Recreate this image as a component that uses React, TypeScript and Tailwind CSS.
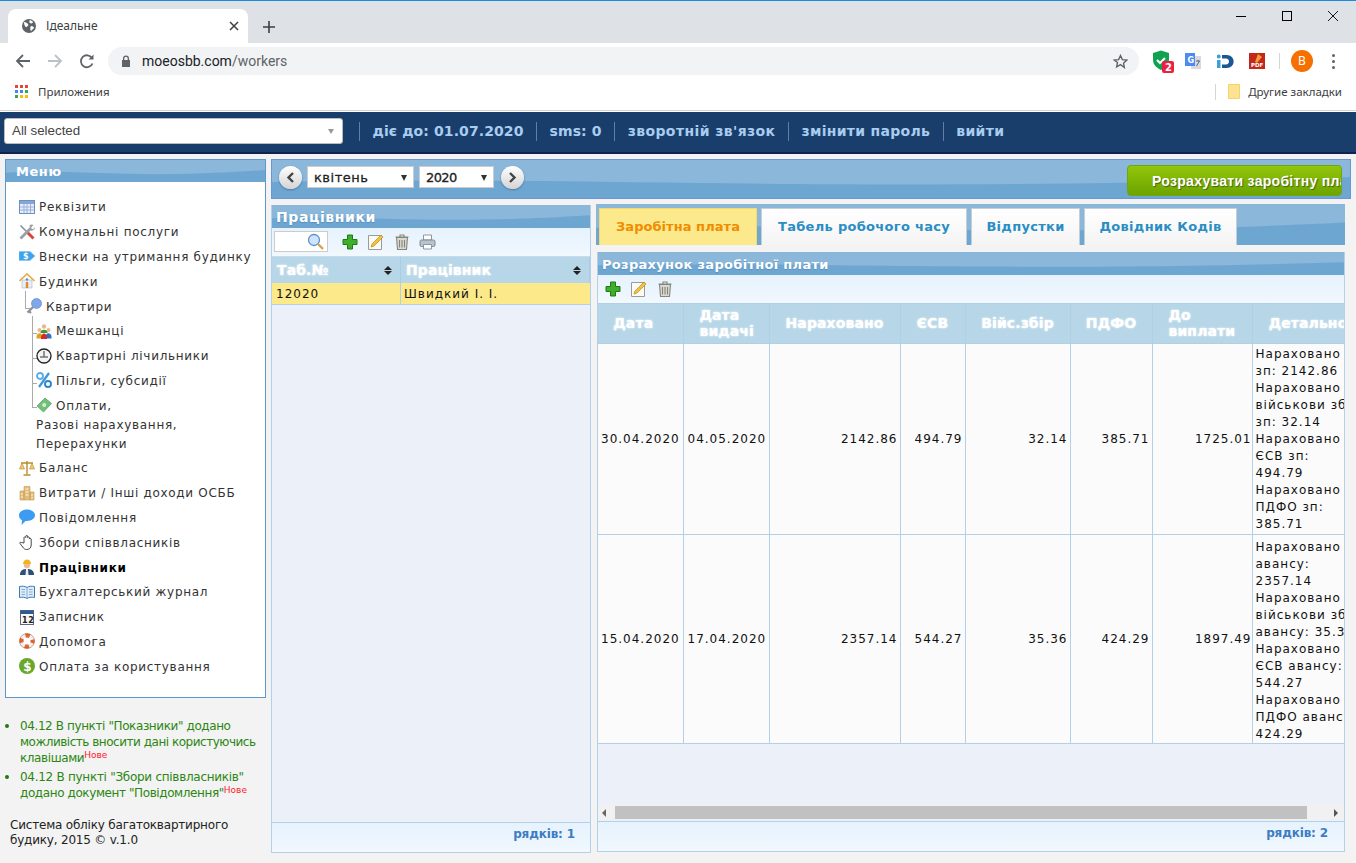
import React from "react";

const sans = "font-['DejaVu_Sans',sans-serif]";

function Wave() {
  return (
    <svg className="absolute inset-0 w-full h-full" viewBox="0 0 1000 100" preserveAspectRatio="none">
      <path d="M0 58 C300 40 500 90 1000 45 L1000 100 L0 100Z" fill="#6ea6d2" />
    </svg>
  );
}

function TitleBar({ children, cls }: { children: React.ReactNode; cls: string }) {
  return (
    <div className="relative h-[23px] shrink-0 bg-[#8ab7da] overflow-hidden">
      <Wave />
      <div className={`relative pl-[4px] leading-[25px] font-bold text-white [text-shadow:0_1px_1px_#5a8fbb] ${cls} ${sans}`}>
        {children}
      </div>
    </div>
  );
}

const Plus = () => (
  <svg width="16" height="16" viewBox="0 0 16 16"><path d="M5.500 1h5v4.500H15v5h-4.500V15h-5v-4.500H1v-5h4.500Z" fill="#3fae2a" stroke="#1f7a14" /></svg>
);
const Edit = () => (
  <svg width="16" height="16" viewBox="0 0 16 16"><path d="M.5 1.500h13v14H.5Z" fill="#fbfbf5" stroke="#9a9a9a" /><path d="M3 13l1-3 9-9 2 2-9 9Z" fill="#f4c23c" stroke="#b98a17" strokeWidth=".7" /></svg>
);
const Trash = () => (
  <svg width="16" height="16" viewBox="0 0 16 16" fill="none" stroke="#85857b" strokeWidth="1.100"><path d="M1.500 3h13M6 3V1h4v2" /><path d="M2.500 3.500l1 12h9l1-12Z" fill="#d9d9d2" /><path d="M5.500 6v7.500M8 6v7.500M10.500 6v7.500" /></svg>
);
const Printer = () => (
  <svg width="17" height="16" viewBox="0 0 17 16"><path d="M4.500 1h8v5h-8Z" fill="#fff" stroke="#8b97a3" /><rect x="1" y="6" width="15" height="6.500" rx="1.500" fill="#b9c3cc" stroke="#7e8a96" /><path d="M4.500 10.500h8v4.500h-8Z" fill="#fff" stroke="#8b97a3" /></svg>
);

function Ico({ name }: { name: string }) {
  const s = { width: 16, height: 16, viewBox: "0 0 16 16" };
  switch (name) {
    case "table":
      return <svg {...s}><rect x=".5" y="1.500" width="15" height="13" fill="#e6eefa" stroke="#6f8fc0" /><rect x="1" y="2" width="14" height="3" fill="#86a6d8" /><path d="M1 8h14M1 11h14M5 5v9M8 5v9M11.500 5v9" stroke="#8ba5cf" strokeWidth=".8" /></svg>;
    case "tools":
      return <svg {...s}><path d="M7.500 7.500L14.500 14.500" stroke="#d8453a" strokeWidth="3" /><path d="M1.500 1.500L8 8" stroke="#8a8f94" strokeWidth="1.600" /><path d="M1.500 14.500L11.500 4.500" stroke="#9aa0a6" strokeWidth="2.800" /><path d="M10.500 1.500a3.300 3.300 0 0 1 4-.4L12.200 3.400l.5 1.400 1.400.5 2-2.200a3.500 3.500 0 0 1-5 3.200Z" fill="#9aa0a6" /></svg>;
    case "tag":
      return <svg {...s}><path d="M0 3.500h11L16 8l-5 4.500H0Z" fill="#3fa4ee" stroke="#7cc4f4" strokeWidth=".6" /><text x="4" y="11" fontSize="8" fill="#fff" fontWeight="700" fontFamily="DejaVu Sans">$</text></svg>;
    case "house":
      return <svg {...s}><path d="M3 7h10v8H3Z" fill="#e8eef5" stroke="#a9b4bf" strokeWidth=".6" /><path d="M.5 8L8 1l7.500 7" fill="none" stroke="#eaa94b" strokeWidth="1.600" /><path d="M6.800 9h2.400v6H6.800Z" fill="#e08a2a" /><circle cx="8" cy="6.500" r="1.200" fill="#5a90c4" /></svg>;
    case "key":
      return <svg {...s}><circle cx="10.500" cy="5.500" r="5" fill="#7fa6e8" stroke="#5b7fc4" strokeWidth=".6" /><path d="M7 9L1.500 14.500M3 13l2 2" stroke="#8d8f92" strokeWidth="2.200" /></svg>;
    case "people":
      return <svg {...s}><circle cx="8" cy="3.500" r="2.200" fill="#e9b98b" /><path d="M4.500 9c0-3 7-3 7 0v1h-7Z" fill="#3d9a3a" /><circle cx="3.500" cy="7" r="2" fill="#e9b98b" /><circle cx="12.500" cy="7" r="2" fill="#e9b98b" /><path d="M.5 14c0-5 6-5 6 0v1.500h-6Z" fill="#e0a020" /><path d="M9.500 14c0-5 6-5 6 0v1.500h-6Z" fill="#2f72c4" /><path d="M5 15c0-6 6-6 6 0v1H5Z" fill="#d52a2a" /></svg>;
    case "clock":
      return <svg {...s}><circle cx="8" cy="8" r="7" fill="#f4f4f4" stroke="#222" strokeWidth="1.300" /><path d="M8 3v5.500M4 9h8" stroke="#333" strokeWidth="1" /></svg>;
    case "percent":
      return <svg {...s}><circle cx="4" cy="4" r="3" fill="none" stroke="#56aee8" strokeWidth="1.900" /><circle cx="12" cy="12" r="3" fill="none" stroke="#2e84cf" strokeWidth="1.900" /><path d="M13 1L3 15" stroke="#3b96dd" strokeWidth="2.200" /></svg>;
    case "money":
      return <svg {...s}><path d="M1 9l8-8 6.500 5.500-8 8.500Z" fill="#74c07a" stroke="#4e9c55" strokeWidth=".7" /><circle cx="8.200" cy="8" r="2" fill="#d3efd2" /></svg>;
    case "scales":
      return <svg {...s}><path d="M8 1v13M2 3h12M4.500 15h7" stroke="#b98c28" strokeWidth="1.400" /><path d="M3 3l-2.500 6h5Z M13 3l-2.500 6h5Z" fill="#eccb6e" stroke="#b98c28" strokeWidth=".6" /></svg>;
    case "city":
      return <svg {...s}><path d="M1 6h4v9H1ZM5 1.500h6V15H5ZM11 7h4v8h-4Z" fill="#e3bd7b" stroke="#c59c58" strokeWidth=".6" /><path d="M6.500 4h3M6.500 7h3M6.500 10h3M2 9h2M2 12h2M12 10h2M12 13h2" stroke="#fff3d6" /></svg>;
    case "chat":
      return <svg {...s}><path d="M8 .5c4.500 0 8 2.500 8 5.800S12.500 12 8 12H6.500L2.500 16l.5-4.700C1 10.300 0 8.500 0 6.300 0 3 3.500.5 8 .5Z" fill="#3e9bf2" /></svg>;
    case "hand":
      return <svg {...s} fill="#fff" stroke="#333" strokeWidth=".9"><path d="M5 9V3.500a1 1 0 0 1 1.800 0V2a1 1 0 0 1 1.800 0v1.500a1 1 0 0 1 1.800 0V5a1 1 0 0 1 1.800 0v6c0 3-2 4.500-4.500 4.500-2 0-3-1-4-2.500L1 9.500c-.5-1 .7-1.800 1.500-1Z" /></svg>;
    case "worker":
      return <svg {...s}><path d="M1 16c0-5 3-6 7-6s7 1 7 6Z" fill="#2f4f78" /><path d="M7 10h2l.5 6h-3Z" fill="#e8eef5" /><circle cx="8" cy="6" r="3.200" fill="#edbd8e" /><path d="M4 5c0-6 8-6 8 0Z" fill="#f1b21c" /></svg>;
    case "book":
      return <svg {...s}><path d="M8 3.500C6 2 3 2 .5 2.500v11C3 13 6 13 8 14.500 10 13 13 13 15.500 13.500v-11C13 2 10 2 8 3.500Z" fill="#dcecfb" stroke="#3d78b5" /><path d="M8 3.500v11M2.500 5.500h3.500M2.500 8h3.500M10 5.500h3.500M10 8h3.500M2.500 10.500h3.500M10 10.500h3.500" stroke="#6f9ccb" strokeWidth=".8" /></svg>;
    case "cal":
      return <svg {...s}><rect x="1.500" y="1.500" width="13" height="14" fill="#f8f8f8" stroke="#667" /><rect x="1.500" y="1.500" width="13" height="3.500" fill="#2c5d92" /><text x="3" y="13.500" fontSize="8" fontWeight="700" fill="#222" fontFamily="DejaVu Sans">12</text></svg>;
    case "ring":
      return <svg {...s}><circle cx="8" cy="8" r="5.500" fill="none" stroke="#f0f0f0" strokeWidth="4" /><circle cx="8" cy="8" r="5.500" fill="none" stroke="#e2632c" strokeWidth="4" strokeDasharray="4.300 4.340" strokeDashoffset="2.200" /><circle cx="8" cy="8" r="7.500" fill="none" stroke="#a94f28" strokeWidth=".5" /></svg>;
    case "dollar":
      return <svg {...s}><circle cx="8" cy="8" r="8" fill="#6aa82c" /><text x="4.300" y="12.500" fontSize="12" fontWeight="700" fill="#fff" fontFamily="DejaVu Sans">$</text></svg>;
  }
  return null;
}

function MenuRow({ icon, label, indent = 0, bold = false }: { icon: string; label: string; indent?: number; bold?: boolean }) {
  const ml = indent === 0 ? "ml-[13px]" : indent === 1 ? "ml-[20px]" : "ml-[30px]";
  return (
    <div className={`relative flex items-center h-[24.800px] ${ml} gap-[4px] whitespace-nowrap ${bold ? "font-bold text-black" : "text-[#333]"}`}>
      <span className="shrink-0 w-[16px] h-[16px] block -mt-[1px]"><Ico name={icon} /></span>
      <span>{label}</span>
    </div>
  );
}

function Sidebar() {
  return (
    <aside className="w-[261px] shrink-0 flex flex-col">
      <div className="h-[539px] flex flex-col border border-[#5f97cb] bg-white">
        <div className="relative h-[22px] bg-[#8ab7da] overflow-hidden">
          <Wave />
          <div className={`relative pl-[10px] text-[13px] leading-[24px] font-bold text-white tracking-[0.55px] ${sans}`}>Меню</div>
        </div>
        <div className={`relative pt-[13px] text-[12px] tracking-[0.7px] ${sans}`}>
          <span className="absolute left-[19px] top-[109px] w-[8px] h-[18px] border-l border-b border-[#aaa]" />
          <span className="absolute left-[26px] top-[134px] w-[5px] h-[92px] border-l border-b border-[#aaa]" />
          <span className="absolute left-[26px] top-[151px] w-[5px] h-px bg-[#aaa]" />
          <span className="absolute left-[26px] top-[176px] w-[5px] h-px bg-[#aaa]" />
          <span className="absolute left-[26px] top-[201px] w-[5px] h-px bg-[#aaa]" />
          <MenuRow icon="table" label="Реквізити" />
          <MenuRow icon="tools" label="Комунальні послуги" />
          <MenuRow icon="tag" label="Внески на утримання будинку" />
          <MenuRow icon="house" label="Будинки" />
          <MenuRow icon="key" label="Квартири" indent={1} />
          <MenuRow icon="people" label="Мешканці" indent={2} />
          <MenuRow icon="clock" label="Квартирні лічильники" indent={2} />
          <MenuRow icon="percent" label="Пільги, субсидії" indent={2} />
          <MenuRow icon="money" label="Оплати," indent={2} />
          <div className="ml-[30px] text-[#333] leading-[18.500px] -mt-[2px] mb-[2.800px]">Разові нарахування,<br />Перерахунки</div>
          <MenuRow icon="scales" label="Баланс" />
          <MenuRow icon="city" label="Витрати / Інші доходи ОСББ" />
          <MenuRow icon="chat" label="Повідомлення" />
          <MenuRow icon="hand" label="Збори співвласників" />
          <MenuRow icon="worker" label="Працівники" bold />
          <MenuRow icon="book" label="Бухгалтерський журнал" />
          <MenuRow icon="cal" label="Записник" />
          <MenuRow icon="ring" label="Допомога" />
          <MenuRow icon="dollar" label="Оплата за користування" />
        </div>
      </div>
      <ul className={`mt-[20px] text-[12px] leading-[16px] tracking-[-0.4px] text-[#2b8612] ${sans}`}>
        <li className="relative pl-[15px] pb-[3px]">
          <span className="absolute left-[0px] top-[6px] w-[4px] h-[4px] rounded-full bg-[#1f7a10]" />
          04.12 В пункті "Показники" додано <span className="tracking-[-0.48px]">можливість вносити дані користуючись</span> клавішами<sup className="text-[9px] tracking-normal text-[#ff1a2e] leading-none">Нове</sup>
        </li>
        <li className="relative pl-[15px]">
          <span className="absolute left-[0px] top-[6px] w-[4px] h-[4px] rounded-full bg-[#1f7a10]" />
          <span className="tracking-[-0.28px]">04.12 В пункті "Збори співвласників"</span> додано документ "Повідомлення"<sup className="text-[9px] tracking-normal text-[#ff1a2e] leading-none">Нове</sup>
        </li>
      </ul>
      <div className={`mt-[17px] pl-[5px] text-[12px] leading-[15px] tracking-[-0.2px] text-[#222] ${sans}`}>
        Система обліку багатоквартирного<br />будику, 2015 © v.1.0
      </div>
    </aside>
  );
}

function Chrome() {
  return (
    <div className="shrink-0 h-[112px] bg-white flex flex-col font-['Noto_Sans',sans-serif]">
      <div className="h-[1px] bg-[#1a8ce0]" />
      <div className="h-[42px] bg-[#dee1e6] flex items-end relative pl-[8px]">
        <div className="w-[240px] h-[34px] bg-white rounded-t-[8px] flex items-center pl-[13px] pr-[9px] text-[12px] text-[#3c4043]">
          <svg width="16" height="16" viewBox="0 0 16 16"><circle cx="8" cy="8" r="7" fill="#5f6368" /><path d="M3 4c2 0 3 1 4 2s-1 3-2 3-2-3-2-5Zm6-2c1 1 3 1 3 2s-2 2-3 1-1-2 0-3Zm1 6c2 0 3 1 3 2l-3 3c-1-1-1-4 0-5Z" fill="#fff" /></svg>
          <span className="ml-[9px] flex-1">Ідеальне</span>
          <svg width="10" height="10" viewBox="0 0 10 10" stroke="#3c4043" strokeWidth="1.500"><path d="M1 1l8 8M9 1l-8 8" /></svg>
        </div>
        <svg className="ml-[15px] mb-[10px]" width="12" height="12" viewBox="0 0 12 12" stroke="#3c4043" strokeWidth="1.600"><path d="M6 0v12M0 6h12" /></svg>
        <div className="ml-auto mr-[18px] mb-[10px] flex items-center gap-[36px] h-[24px] self-start mt-[3px]">
          <span className="block w-[10px] h-px bg-black" />
          <span className="block w-[10px] h-[10px] border border-black" />
          <svg width="10" height="10" viewBox="0 0 10 10" stroke="#000" strokeWidth=".9"><path d="M0 0l10 10M10 0L0 10" /></svg>
        </div>
      </div>
      <div className="h-[36px] flex items-center pl-[15px] pr-[17px]">
        <svg width="16" height="16" viewBox="0 0 16 16" fill="none" stroke="#5f6368" strokeWidth="1.800"><path d="M15 8H2M8 2L2 8l6 6" /></svg>
        <svg className="ml-[16px]" width="16" height="16" viewBox="0 0 16 16" fill="none" stroke="#bdc1c6" strokeWidth="1.800"><path d="M1 8h13M8 2l6 6-6 6" /></svg>
        <svg className="ml-[16px]" width="16" height="16" viewBox="0 0 16 16" fill="none" stroke="#5f6368" strokeWidth="1.800"><path d="M13.500 10.500a6 6 0 1 1-.5-5.500" /><path d="M14.500 1.500v5h-5Z" fill="#5f6368" stroke="none" /></svg>
        <div className="ml-[13px] w-[1031px] h-[28px] rounded-full bg-[#f1f3f4] flex items-center pl-[13px] pr-[11px] text-[14px] font-['Roboto',sans-serif]">
          <svg width="10" height="12" viewBox="0 0 10 12"><path d="M2 5V3.500a3 3 0 0 1 6 0V5h1v7H1V5Zm1.300 0h3.400V3.500a1.700 1.700 0 0 0-3.400 0Z" fill="#5f6368" /></svg>
          <span className="ml-[11px] text-[#202124]">moeosbb.com</span><span className="text-[#5f6368]">/workers</span>
          <svg className="ml-auto" width="15" height="15" viewBox="0 0 24 24" fill="none" stroke="#5f6368" strokeWidth="2.200"><path d="M12 2.500l3 6.500 7 .8-5.200 4.800 1.400 7L12 17.100 5.800 20.600l1.400-7L2 9.800 9 9Z" /></svg>
        </div>
        <svg className="ml-[12px]" width="24" height="24" viewBox="0 0 24 24"><path d="M2 4l8-2.500L18 4v7c0 5-4 8-8 10-4-2-8-5-8-10Z" fill="#12a150" /><path d="M6 11l3 3 5-5" fill="none" stroke="#fff" strokeWidth="2" /><rect x="11" y="12" width="12" height="12" rx="2" fill="#ef1f42" /><text x="14" y="22" fontSize="10" fontWeight="700" fill="#fff" fontFamily="DejaVu Sans">2</text></svg>
        <svg className="ml-[10px]" width="16" height="17" viewBox="0 0 16 17"><path d="M6 3h10v13H6Z" fill="#d7dbe0" /><path d="M0 0h10v13H0Z" fill="#4d8bf0" /><text x="2.500" y="9.500" fontSize="8" fontWeight="700" fill="#fff" fontFamily="DejaVu Sans">G</text><path d="M11 8h4M13 7v1M11.500 13l3-5" stroke="#667" /></svg>
        <svg className="ml-[16px]" width="17" height="15" viewBox="0 0 17 15"><path d="M0 6h3.500v8H0Z" fill="#3ba1d8" /><circle cx="1.700" cy="2.500" r="2" fill="#3ba1d8" /><path d="M5 1h4.500c9.500 0 9.500 13 0 13H5v-3.500h4c4 0 4-6 0-6H5Z" fill="#1d5694" /></svg>
        <svg className="ml-[15px]" width="16" height="16" viewBox="0 0 16 16"><rect width="16" height="16" fill="#c1271b" /><path d="M9 1l4 3-5 6-2-1Z" fill="#f59d2e" /><text x="2" y="13.500" fontSize="5.500" fontWeight="700" fill="#fff" fontFamily="DejaVu Sans">PDF</text></svg>
        <span className="ml-[14px] w-px h-[16px] bg-[#d5d5d5]" />
        <span className="ml-[11px] w-[22px] h-[22px] rounded-full bg-[#f57000] text-white text-[12px] flex items-center justify-center">B</span>
        <span className="ml-[19px] flex flex-col gap-[3px]">
          <i className="block w-[3px] h-[3px] rounded-full bg-[#5f6368]" /><i className="block w-[3px] h-[3px] rounded-full bg-[#5f6368]" /><i className="block w-[3px] h-[3px] rounded-full bg-[#5f6368]" />
        </span>
      </div>
      <div className="h-[32px] border-b border-[#d4d4d4] flex items-center pb-[6px] pl-[15px] pr-[14px] text-[11.500px] text-[#3c4043]">
        <svg width="13" height="13" viewBox="0 0 13 13">
          {[0, 5, 10].map((x, i) => [0, 5, 10].map((y, j) => (
            <rect key={`${i}${j}`} x={x} y={y} width="3" height="3" fill={[["#ea4335", "#ea4335", "#ea4335"], ["#4285f4", "#4285f4", "#34a853"], ["#34a853", "#fbbc05", "#fbbc05"]][j][i]} />
          )))}
        </svg>
        <span className="ml-[10px]">Приложения</span>
        <span className="ml-auto w-px h-[16px] bg-[#d5d5d5]" />
        <svg className="ml-[12px]" width="12" height="15" viewBox="0 0 12 15"><path d="M.5.500h11v14H.5Z" fill="#fde293" stroke="#f6d565" /></svg>
        <span className="ml-[8px]">Другие закладки</span>
      </div>
    </div>
  );
}

function TopNav() {
  const items = [
    ["діє до: 01.07.2020", "tracking-[0.1px]"],
    ["sms: 0", "tracking-[0.1px]"],
    ["зворотній зв'язок", "tracking-[0.4px]"],
    ["змінити пароль", "tracking-[0.3px]"],
    ["вийти", "tracking-[0.35px]"],
  ];
  return (
    <div className="shrink-0 h-[42px] bg-[#1a3e6b] border-b-2 border-[#0f2250] flex items-start pt-[6px] pl-[4px]">
      <div className="w-[339px] h-[26px] bg-white rounded-[3px] border border-[#bbb] flex items-center pl-[7px] pr-[8px] font-['Liberation_Sans',sans-serif] text-[13.330px] text-[#444]">
        All selected
        <span className="ml-auto w-0 h-0 border-x-[3px] border-x-transparent border-t-[5px] border-t-[#999]" />
      </div>
      <div className={`ml-[16px] mt-[4px] flex items-center font-bold text-[14px] text-[#a8cdef] ${sans}`}>
        {items.map(([t, tr]) => (
          <span key={t} className={`flex items-center border-l border-[#5f7fa6] h-[19px] pl-[12.500px] pr-[12.500px] whitespace-nowrap ${tr}`}>{t}</span>
        ))}
      </div>
    </div>
  );
}

function Circle({ dir }: { dir: "l" | "r" }) {
  return (
    <span className="relative w-[23px] h-[23px] rounded-full bg-gradient-to-b from-white to-[#d4d4d4] shadow-[0_1px_2px_#4b7aa3] flex items-center justify-center shrink-0">
      <svg width="9" height="11" viewBox="0 0 9 11" fill="none" stroke="#444" strokeWidth="2.400"><path d={dir === "l" ? "M7 1L2.500 5.500 7 10" : "M2 1l4.500 4.500L2 10"} /></svg>
    </span>
  );
}

function Sel({ label, w, tr }: { label: string; w: string; tr: string }) {
  return (
    <div className={`${w} h-[22px] bg-white border border-[#ccc] flex items-center pt-[1px] pl-[6px] pr-[6px] text-[13px] [-webkit-text-stroke:0.3px_#222] ${tr} text-[#222] ${sans}`}>
      {label}
      <span className="ml-auto w-0 h-0 border-x-[3.500px] border-x-transparent border-t-[6px] border-t-[#333]" />
    </div>
  );
}

function DateBar() {
  return (
    <div className="relative h-[40px] shrink-0 bg-[#8ab7da] border border-[#6b95d8] overflow-hidden">
      <Wave />
      <div className="relative h-full flex items-start pt-[6px] pl-[7px]">
        <Circle dir="l" />
        <span className="ml-[5px]"><Sel label="квітень" w="w-[107px]" tr="tracking-[0.5px]" /></span>
        <span className="ml-[5px]"><Sel label="2020" w="w-[75px]" tr="tracking-[-0.6px]" /></span>
        <span className="ml-[7px]"><Circle dir="r" /></span>
        <div className="ml-auto -mt-[1px] mr-[8px] w-[215px] h-[31px] overflow-hidden rounded-[4px] border border-[#6fa50e] bg-gradient-to-b from-[#92c60c] to-[#6da400] pl-[24px] font-['Liberation_Sans',sans-serif] font-bold text-[14px] leading-[31px] tracking-[0.3px] text-white whitespace-nowrap [text-shadow:1px_1px_1px_#47650a]">
          Розрахувати заробітну плату
        </div>
      </div>
    </div>
  );
}

const HeadCls = `bg-[#b7d7e8] text-white ${sans} font-bold`;

function WorkersPanel() {
  return (
    <section className="mt-[1px] w-[320px] shrink-0 flex flex-col border border-[#b4cfe8] border-t-0 bg-[#ecf1f9]">
      <TitleBar cls="text-[14px] tracking-[0.6px]">Працівники</TitleBar>
      <div className="h-[28px] shrink-0 bg-gradient-to-b from-[#e6f2fd] to-[#f1f8fe] flex items-center pb-[1px] pl-[2px]">
        <div className="w-[54px] h-[21px] bg-white border border-[#ccc] flex items-center justify-end pr-[3px]">
          <svg width="17" height="17" viewBox="0 0 17 17"><circle cx="7" cy="7" r="5.500" fill="#cfe4fb" stroke="#5a8fd6" strokeWidth="1.300" /><path d="M11 11l5 5" stroke="#d8a24a" strokeWidth="2.400" /></svg>
        </div>
        <span className="ml-[14px]"><Plus /></span>
        <span className="ml-[10px]"><Edit /></span>
        <span className="ml-[10px]"><Trash /></span>
        <span className="ml-[9px]"><Printer /></span>
      </div>
      <div className={`h-[27px] shrink-0 flex text-[14px] tracking-[0.1px] leading-[26px] border-t border-[#c4dcee] ${HeadCls}`}>
        {[["Таб.№", "w-[129px]"], ["Працівник", "flex-1"]].map(([t, w]) => (
          <div key={t} className={`${w} flex items-center pl-[5px] pr-[8px] border-r border-[#a9cde4] [text-shadow:0_0_2px_#fff]`}>
            {t}
            <span className="ml-auto flex flex-col gap-[1px]">
              <i className="block w-0 h-0 border-x-[4px] border-x-transparent border-b-[4px] border-b-[#222]" />
              <i className="block w-0 h-0 border-x-[4px] border-x-transparent border-t-[4px] border-t-[#222]" />
            </span>
          </div>
        ))}
      </div>
      <div className={`h-[22px] shrink-0 flex bg-[#fbe98a] border-b border-[#b4cfe8] text-[12px] tracking-[1px] text-[#111] leading-[22px] ${sans}`}>
        <div className="w-[129px] pl-[4px] border-r border-[#b4cfe8]">12020</div>
        <div className="flex-1 pl-[3px]">Швидкий І. І.</div>
      </div>
      <div className="flex-1" />
      <div className={`h-[30px] shrink-0 border-t border-[#b4cfe8] bg-gradient-to-b from-[#e6f2fd] to-[#f1f8fe] text-right pr-[15px] text-[12px] leading-[22px] font-bold text-[#3b7cc4] tracking-[-0.15px] ${sans}`}>рядків: 1</div>
    </section>
  );
}

const COLS = [85, 86, 131, 65, 105, 82, 100, 112];
const HEADS = ["Дата", "Дата видачі", "Нараховано", "ЄСВ", "Війс.збір", "ПДФО", "До виплати", "Детально"];
const ROWS = [
  {
    h: "h-[191px]",
    pad: "",
    cells: ["30.04.2020", "04.05.2020", "2142.86", "494.79", "32.14", "385.71", "1725.01"],
    d: ["Нараховано", "зп: 2142.86", "Нараховано", "військови збір", "зп: 32.14", "Нараховано", "ЄСВ зп:", "494.79", "Нараховано", "ПДФО зп:", "385.71"],
  },
  {
    h: "h-[209px]",
    pad: "pt-[3px]",
    cells: ["15.04.2020", "17.04.2020", "2357.14", "544.27", "35.36", "424.29", "1897.49"],
    d: ["Нараховано", "авансу:", "2357.14", "Нараховано", "військови збір", "авансу: 35.36", "Нараховано", "ЄСВ авансу:", "544.27", "Нараховано", "ПДФО авансу:", "424.29"],
  },
];

function SalaryPanel() {
  return (
    <section className="mt-[7px] mb-[1px] flex-1 min-h-0 ml-[1px] mr-[6px] flex flex-col border border-[#b4cfe8] border-t-0 bg-[#ecf1f9]">
      <TitleBar cls="text-[13px] tracking-[0.3px]">Розрахунок заробітної плати</TitleBar>
      <div className="h-[28px] shrink-0 bg-gradient-to-b from-[#e6f2fd] to-[#f1f8fe] flex items-center pl-[7px]">
        <Plus />
        <span className="ml-[10px]"><Edit /></span>
        <span className="ml-[10px]"><Trash /></span>
      </div>
      <div className="flex-1 min-h-0 overflow-hidden">
        <table className={`table-fixed border-collapse w-[766px] ${sans}`}>
          <colgroup>{COLS.map((w, i) => <col key={i} style={{ width: w }} />)}</colgroup>
          <thead>
            <tr className={`h-[40px] text-[14px] tracking-[0.1px] leading-[16px] ${HeadCls}`}>
              {HEADS.map((t, i) => (
                <th key={t} className={`border border-[#b0d0e8] border-l-0 font-bold pb-[1px] ${i === 1 || i === 6 ? "text-left pl-[16px]" : i === 0 ? "text-center pr-[14px]" : "text-center"} [text-shadow:0_0_2px_#fff] overflow-hidden`}>{t}</th>
              ))}
            </tr>
          </thead>
          <tbody className="bg-[#fbfbfb] text-[12px] tracking-[1px] text-[#111]">
            {ROWS.map((r) => (
              <tr key={r.d[1]} className={r.h}>
                {r.cells.map((c, i) => (
                  <td key={i} className={`border border-[#b4cfe8] border-l-0 ${i === 0 ? "pl-[3px] text-left" : i === 1 ? "pl-[4px] text-left" : i === 6 ? "pr-0 text-right" : "pr-[2px] text-right"}`}>{c}</td>
                ))}
                <td className={`border-y border-[#b4cfe8] pl-[3px] leading-[17px] whitespace-nowrap overflow-hidden ${r.pad}`}>
                  {r.d.map((l, i) => <div key={i}>{l}</div>)}
                </td>
              </tr>
            ))}
          </tbody>
        </table>
      </div>
      <div className="h-[15px] shrink-0 mb-[1px] bg-[#f1f1f1] flex items-center">
        <span className="ml-[4px] w-0 h-0 border-y-[4px] border-y-transparent border-r-[4px] border-r-[#666]" />
        <span className="ml-[9px] w-[692px] h-[13px] bg-[#c1c1c1]" />
        <span className="ml-auto mr-[6px] w-0 h-0 border-y-[4px] border-y-transparent border-l-[4px] border-l-[#555]" />
      </div>
      <div className={`h-[30px] shrink-0 border-t border-[#b4cfe8] bg-gradient-to-b from-[#e6f2fd] to-[#f1f8fe] text-right pr-[16px] text-[12px] leading-[22px] font-bold text-[#3b7cc4] tracking-[-0.15px] ${sans}`}>рядків: 2</div>
    </section>
  );
}

function Tabs() {
  const tabs = [["Табель робочого часу", "w-[206px]"], ["Відпустки", "w-[109px]"], ["Довідник Кодів", "w-[153px]"]];
  return (
    <div className="relative h-[41px] shrink-0 mr-[6px] bg-[#8ab7da] overflow-hidden">
      <Wave />
      <div className={`relative h-full flex items-end pl-[3px] gap-[4px] text-[13px] font-bold tracking-[0.3px] ${sans}`}>
        <div className="w-[158px] h-[37px] bg-[#fce98b] border border-b-0 border-[#f5d86e] text-[#f08c00] tracking-[0.05px] flex items-center justify-center">Заробітна плата</div>
        {tabs.map(([t, w]) => (
          <div key={t} className={`${w} h-[37px] bg-gradient-to-b from-white to-[#f4f4f4] border border-b-0 border-[#c5cdd5] text-[#2a8dc4] flex items-center justify-center`}>{t}</div>
        ))}
      </div>
    </div>
  );
}

export default function App() {
  return (
    <div className="w-[1356px] h-[863px] overflow-hidden bg-[#f3f3f3] flex flex-col">
      <Chrome />
      <TopNav />
      <div className="h-[709px] pt-[5px] pl-[5px] flex gap-[5px] min-h-0">
        <Sidebar />
        <main className="flex-1 min-w-0 flex flex-col pr-[5px] pb-[10px]">
          <DateBar />
          <div className="mt-[5px] flex flex-1 min-h-0">
            <WorkersPanel />
            <div className="ml-[5px] flex-1 min-w-0 flex flex-col">
              <Tabs />
              <SalaryPanel />
            </div>
          </div>
        </main>
      </div>
    </div>
  );
}
